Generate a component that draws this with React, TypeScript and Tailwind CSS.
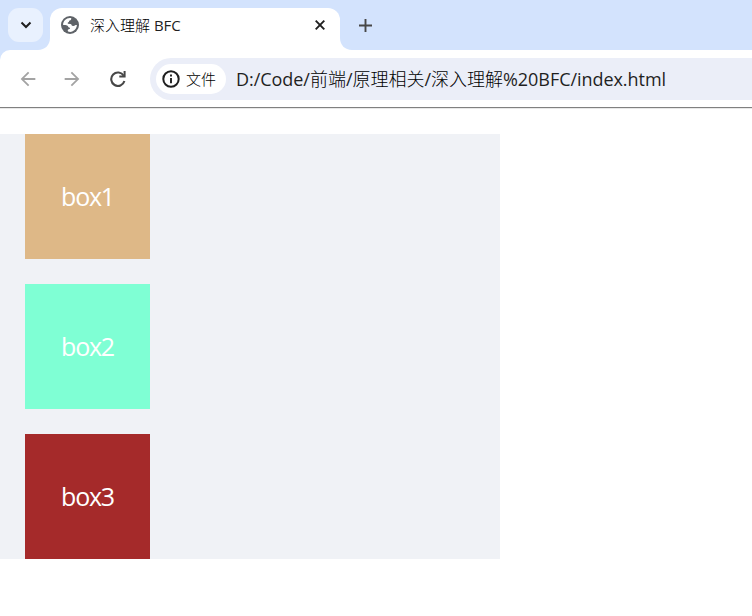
import { MdArrowBack, MdArrowForward } from "react-icons/md";

const boxes = [
  { label: "box1", color: "bg-[#deb887]" },
  { label: "box2", color: "bg-[#7fffd4]" },
  { label: "box3", color: "bg-[#a52a2a]" },
];

// Chinese runs use a lighter weight than the Latin text around them.
function MixedText({ text }: { text: string }) {
  return (
    <>
      {text.split(/([\u4e00-\u9fff]+)/).map((part, i) =>
        i % 2 === 1 ? (
          <span key={i} className="font-light tracking-normal text-black">
            {part}
          </span>
        ) : (
          part
        ),
      )}
    </>
  );
}

function Globe() {
  return (
    <svg width="18" height="18" viewBox="0 0 18 18" className="shrink-0">
      <circle cx="9" cy="9" r="9" fill="#5f6368" />
      <path
        d="M10.2 2.1 C10.4 3.4 9.9 4.3 8.7 4.6 L8 5.1 C8.2 6 7.7 6.3 6.8 6.5 L6.8 7.8 L9.5 8 C10.5 8.2 10.7 9 10.9 9.8 L12.8 9.9 C13.7 9.8 13.9 9 14.6 8.9 L15.9 9 C15.8 12.7 12.8 15.7 9.1 15.9 L7 15.6 L6.7 14 C7.3 13.2 8.2 13.2 9 12.8 C9.2 11.8 8.6 11.3 7.5 11.2 C6.7 9.6 5.7 9.2 4.4 9.1 L2.1 9 C2.1 5.1 5.3 1.9 9 2 Z"
        fill="#fff"
      />
    </svg>
  );
}

function Reload() {
  return (
    <svg width="16" height="16" viewBox="0 0 16 16" className="shrink-0" fill="none">
      <path d="M13.700 4.800A6.700 6.700 0 1 0 14.400 10" stroke="#474747" strokeWidth="2.100" />
      <path d="M15.600 0v6.500H9.300V4.600h4.300V0Z" fill="#474747" />
    </svg>
  );
}

function Info() {
  return (
    <svg width="18" height="18" viewBox="0 0 18 18" className="shrink-0" fill="none">
      <circle cx="9" cy="9" r="7.700" stroke="#1f1f1f" strokeWidth="2" />
      <path d="M9 4.600v1.900M9 8v5.300" stroke="#1f1f1f" strokeWidth="1.900" />
    </svg>
  );
}

function TabStrip() {
  return (
    <div className="flex h-[50px] bg-[#d3e3fd]">
      <button className="ml-2 mt-2 flex h-[34px] w-[35px] items-center justify-center rounded-[11px] bg-[#e9f1fe]">
        <svg width="12" height="8" viewBox="0 0 12 8" fill="none" stroke="#1f1f1f" strokeWidth="2">
          <path d="M1.5 1.5 6 6l4.500-4.500" />
        </svg>
      </button>
      <div className="-ml-[5px] flex">
        <svg width="12" height="12" viewBox="0 0 12 12" className="self-end">
          <path d="M12 0v12H0C7 12 12 7 12 0Z" fill="#fff" />
        </svg>
        <div className="mt-2 flex h-[42px] w-[290px] items-center rounded-t-[12px] bg-white pb-2 pl-[11px] pr-[15px]">
          <Globe />
          <span className="ml-[11px] whitespace-pre text-[15px] leading-5 text-[#1f1f1f]">
            <MixedText text="深入理解 BFC" />
          </span>
          <svg width="10" height="10" viewBox="0 0 10 10" className="ml-auto" stroke="#1f1f1f" strokeWidth="1.9">
            <path d="m.7.7 8.600 8.600M9.300.7.7 9.300" />
          </svg>
        </div>
        <svg width="12" height="12" viewBox="0 0 12 12" className="self-end">
          <path d="M0 0v12h12C5 12 0 7 0 0Z" fill="#fff" />
        </svg>
      </div>
      <svg width="13" height="13" viewBox="0 0 13 13" className="ml-[7px] mt-[19px]" stroke="#474747" strokeWidth="1.900">
        <path d="M6.500 0v13M0 6.500h13" />
      </svg>
    </div>
  );
}

function Toolbar() {
  return (
    <div className="bg-[#d3e3fd]">
      <div className="flex h-[57px] items-center rounded-tl-[10px] bg-white pl-[17px]">
        <MdArrowBack size={22} className="text-[#a3a3a3]" />
        <MdArrowForward size={22} className="ml-[22px] text-[#a3a3a3]" />
        <span className="ml-[27px]">
          <Reload />
        </span>
        <div className="ml-[24px] flex h-[42px] flex-1 items-center rounded-l-full bg-[#ebeef8] pl-1.5">
          <div className="flex h-[30px] w-[70px] items-center rounded-full bg-white pl-[6px]">
            <Info />
            <span className="ml-[6px] text-[15px] leading-5">
              <MixedText text="文件" />
            </span>
          </div>
          <span className="ml-[10px] whitespace-nowrap text-[18px] leading-6 tracking-[-0.050px] text-[#1f1f1f]">
            <MixedText text="D:/Code/前端/原理相关/深入理解%20BFC/index.html" />
          </span>
        </div>
      </div>
      <div className="h-0.5 border-t border-[#808080] bg-[#e8e8e8]" />
    </div>
  );
}

export default function App() {
  return (
    <div className="h-[616px] w-[752px] overflow-hidden bg-white font-['Open_Sans','Noto_Sans_CJK_SC',sans-serif]">
      <TabStrip />
      <Toolbar />
      <main className="mt-[25px] flex h-[425px] w-[500px] flex-col gap-[25px] bg-[#f0f2f6] pl-[25px]">
        {boxes.map((box) => (
          <div
            key={box.label}
            className={`flex size-[125px] items-center justify-center pb-px text-[25px] leading-[33px] tracking-[-1.2px] text-white ${box.color}`}
          >
            {box.label}
          </div>
        ))}
      </main>
    </div>
  );
}
